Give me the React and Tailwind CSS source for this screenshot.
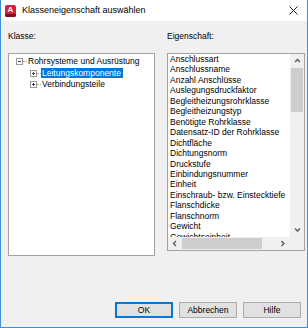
const props = [
  "Anschlussart",
  "Anschlussname",
  "Anzahl Anschlüsse",
  "Auslegungsdruckfaktor",
  "Begleitheizungsrohrklasse",
  "Begleitheizungstyp",
  "Benötigte Rohrklasse",
  "Datensatz-ID der Rohrklasse",
  "Dichtfläche",
  "Dichtungsnorm",
  "Druckstufe",
  "Einbindungsnummer",
  "Einheit",
  "Einschraub- bzw. Einstecktiefe",
  "Flanschdicke",
  "Flanschnorm",
  "Gewicht",
  "Gewichtseinheit",
];

function AppIcon() {
  return (
    <div className="w-[11px] h-[12px] rounded-[2px] bg-[#d0243c] flex flex-col items-center overflow-hidden">
      <span className="text-white font-bold text-[8px] leading-[9px]">A</span>
      <div className="w-full h-[3px] bg-[#7a1020]" />
    </div>
  );
}

function TitleBar() {
  return (
    <div className="h-[21px] bg-white flex items-center flex-none">
      <div className="ml-[4px]">
        <AppIcon />
      </div>
      <span className="ml-[6px] text-[9px] text-black">Klasseneigenschaft auswählen</span>
      <svg className="ml-auto mr-[9px]" width="9" height="9" viewBox="0 0 9 9">
        <path d="M0.5 0.5 L8.5 8.5 M8.5 0.5 L0.5 8.5" stroke="#222" strokeWidth="1" />
      </svg>
    </div>
  );
}

function Expander({ open }) {
  return (
    <div className="w-[7px] h-[7px] border border-[#9a9a9a] bg-white flex-none relative">
      <div className="absolute left-[1px] right-[1px] top-[2px] h-px bg-[#444]" />
      {!open && <div className="absolute top-[1px] bottom-[1px] left-[2px] w-px bg-[#444]" />}
    </div>
  );
}

function Dash() {
  return <div className="h-0 w-[4px] border-t border-dotted border-[#a0a0a0] flex-none" />;
}

function ClassTree() {
  return (
    <div className="h-[203px] bg-white border border-[#a3a3a3] pt-[1px] text-[8.5px] leading-[13px]">
      <div className="flex items-center pl-[7px]">
        <Expander open />
        <Dash />
        <span className="ml-[1px]">Rohrsysteme und Ausrüstung</span>
      </div>
      <div className="flex items-center pl-[21px]">
        <Expander />
        <Dash />
        <span className="bg-[#0078d7] text-white leading-[10px] px-[1px] w-[82px]">Leitungskomponente</span>
      </div>
      <div className="flex items-center pl-[21px]">
        <Expander />
        <Dash />
        <span className="px-[1px]">Verbindungsteile</span>
      </div>
    </div>
  );
}

function Chevron({ dir }) {
  const d = {
    up: "M1 4 L3.5 1.5 L6 4",
    down: "M1 1.5 L3.5 4 L6 1.5",
    left: "M4 1 L1.5 3.5 L4 6",
    right: "M1.5 1 L4 3.5 L1.5 6",
  }[dir];
  const vert = dir === "up" || dir === "down";
  return (
    <svg width={vert ? 7 : 6} height={vert ? 6 : 7} viewBox={vert ? "0 0 7 6" : "0 0 6 7"}>
      <path d={d} fill="none" stroke="#555" strokeWidth="1.3" />
    </svg>
  );
}

function PropertyList() {
  return (
    <div className="h-[198px] bg-white border border-[#a3a3a3] flex flex-col">
      <div className="flex flex-1 min-h-0">
        <ul className="flex-1 overflow-hidden pl-[2px] text-[8.5px] leading-[10.45px] text-black">
          {props.map((p) => (
            <li key={p} className="whitespace-nowrap">
              {p}
            </li>
          ))}
        </ul>
        <div className="w-[14px] bg-[#f0f0f0] flex flex-col items-center">
          <div className="h-[14px] flex items-center justify-center">
            <Chevron dir="up" />
          </div>
          <div className="w-[12px] h-[44px] bg-[#cdcdcd]" />
          <div className="mt-auto h-[14px] flex items-center justify-center">
            <Chevron dir="down" />
          </div>
        </div>
      </div>
      <div className="h-[13px] flex flex-none">
        <div className="flex-1 bg-[#f0f0f0] flex items-center">
          <div className="w-[14px] flex justify-center">
            <Chevron dir="left" />
          </div>
          <div className="w-[80px] h-[11px] bg-[#cdcdcd]" />
          <div className="ml-auto w-[14px] flex justify-center">
            <Chevron dir="right" />
          </div>
        </div>
        <div className="w-[14px] bg-[#f0f0f0]" />
      </div>
    </div>
  );
}

function DialogButton({ children, primary }) {
  return (
    <button
      className={
        primary
          ? "w-[58px] h-[16px] bg-[#e1e1e1] border-2 border-[#0078d7] text-[8.5px] leading-none"
          : "w-[58px] h-[16px] bg-[#e1e1e1] border border-[#adadad] text-[8.5px] leading-none"
      }
    >
      {children}
    </button>
  );
}

export default function App() {
  return (
    <div
      className="w-[308px] h-[328px] flex flex-col bg-[#f0f0f0] border-x border-b border-[#3b8fe0] text-black"
      style={{ fontFamily: '"Liberation Sans", Arial, sans-serif' }}
    >
      <TitleBar />
      <div className="flex-1 flex flex-col pl-[7px] pr-[2px] pb-[9px]">
        <div className="flex gap-[12px] mt-[10px]">
          <div className="w-[147px]">
            <div className="text-[8.5px] leading-[10px] mb-[12px]">Klasse:</div>
            <ClassTree />
          </div>
          <div className="w-[138px]">
            <div className="text-[8.5px] leading-[10px] mb-[12px]">Eigenschaft:</div>
            <PropertyList />
          </div>
        </div>
        <div className="mt-auto flex justify-end gap-[6px] pr-[4px]">
          <DialogButton primary>OK</DialogButton>
          <DialogButton>Abbrechen</DialogButton>
          <DialogButton>Hilfe</DialogButton>
        </div>
      </div>
    </div>
  );
}
